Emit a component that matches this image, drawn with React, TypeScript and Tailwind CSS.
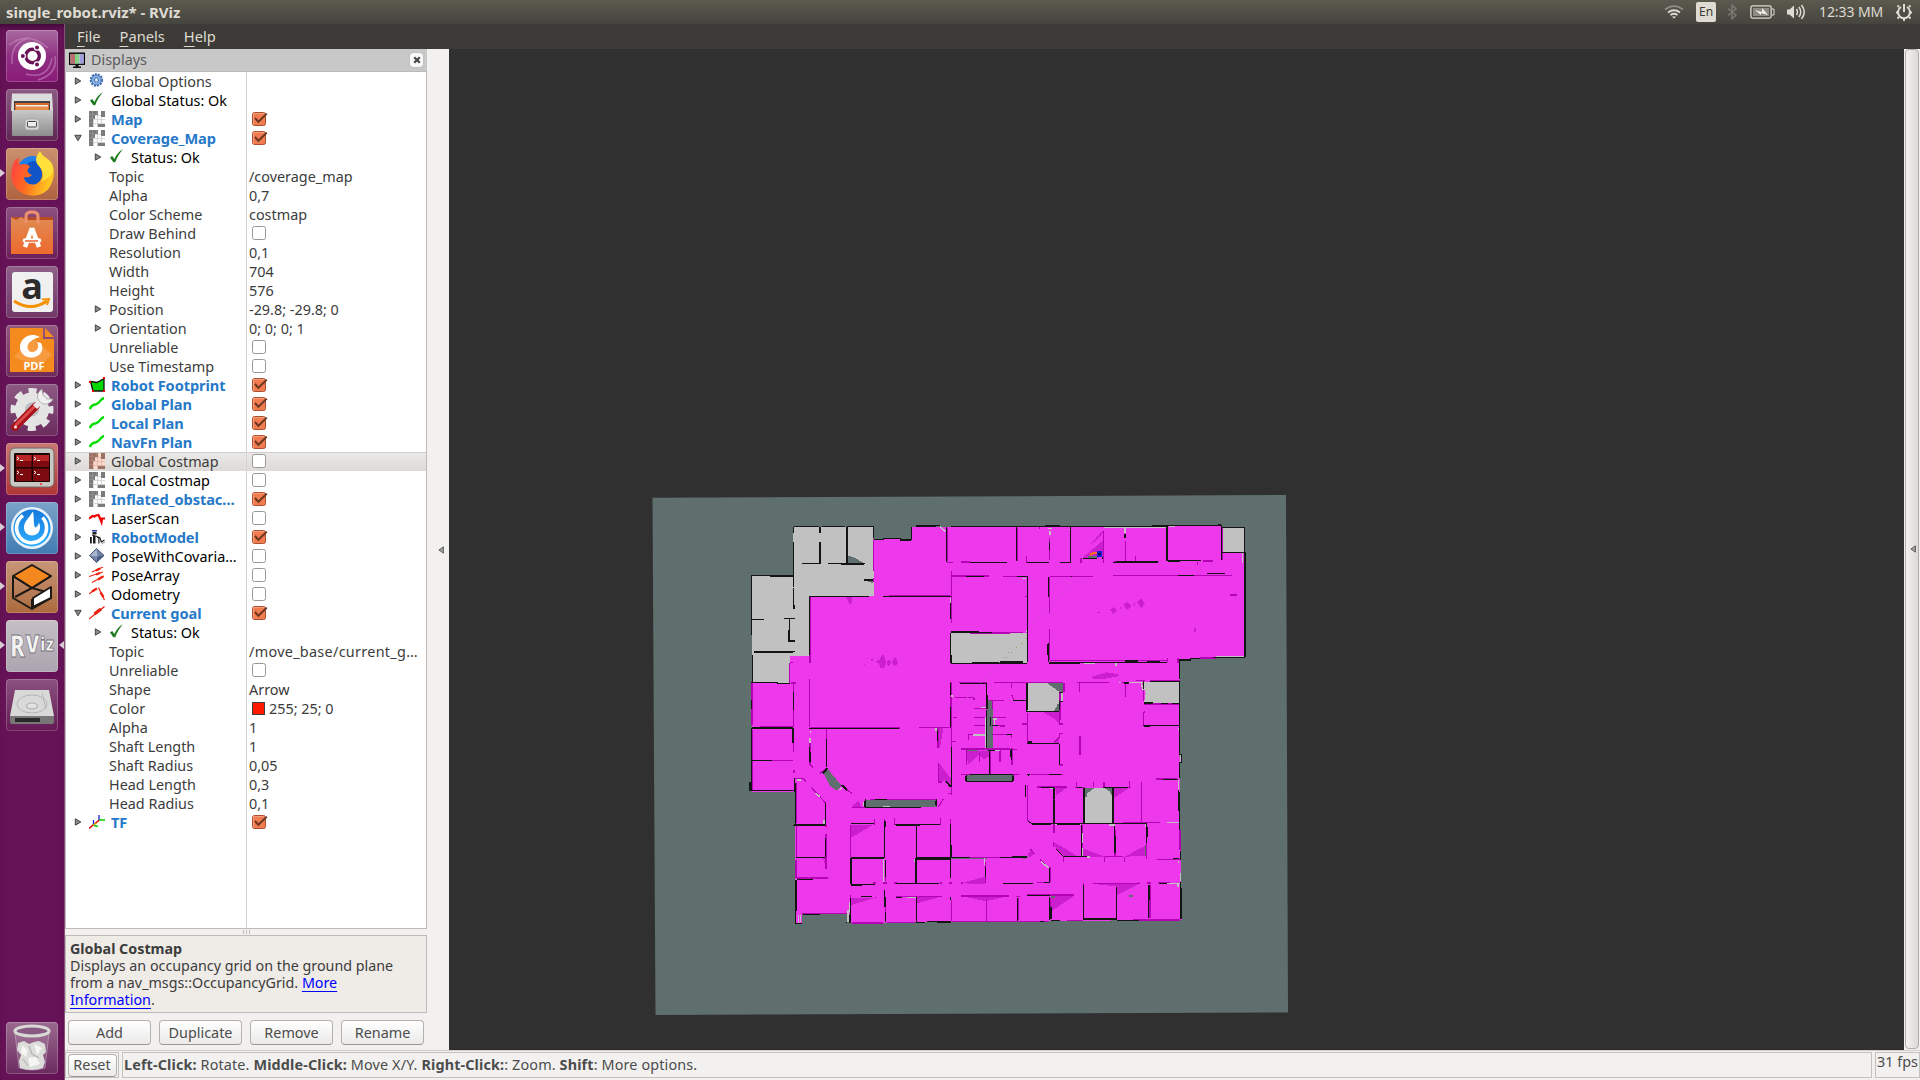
import React from "react";

const FONT = "font-['Noto_Sans','Open_Sans',sans-serif]";

/* ---------- tree icons (16x16) ---------- */

type IconName =
  | "gear" | "check" | "map" | "mapSel" | "foot" | "path" | "laser"
  | "robot" | "cov" | "arrows" | "odom" | "pose" | "tf";

function MapIcon({ selected = false }: { selected?: boolean }) {
  const dark = selected ? "#9c7265" : "#7b7b7b";
  const light = selected ? "#fbd9cb" : "#fdfdfd";
  return (
    <svg width="16" height="16" viewBox="0 0 16 16" shapeRendering="crispEdges">
      <rect width="16" height="16" fill={light} />
      <path d="M4.500 0V16M8.500 0V16M12.500 0V16M0 4.500H16M0 8.500H16M0 12.500H16" stroke={selected ? "#e2b9aa" : "#d6d6d6"} strokeWidth="1" />
      <path d="M0 0H9V4H6V8H4V16H0ZM12 0H16V6H12ZM9 13H16V16H9Z" fill={dark} />
      <path d="M3.500 0V8M7.500 0V4M0 3.500H6M0 7.500H5M0 11.500H4" stroke={selected ? "#ab8174" : "#8e8e8e"} strokeWidth="1" />
    </svg>
  );
}

function TreeIcon({ name }: { name: IconName }) {
  if (name === "map") return <MapIcon />;
  if (name === "mapSel") return <MapIcon selected />;
  return (
    <svg width="16" height="16" viewBox="0 0 16 16" fill="none">
      {name === "gear" && (
        <g transform="translate(-.6 -1)">
          <circle cx="8" cy="8" r="5.400" stroke="#3c6eb4" strokeWidth="2.600" strokeDasharray="2 .9" />
          <circle cx="8" cy="8" r="4.800" fill="#8fb5e3" stroke="#4a7dbf" />
          <circle cx="8" cy="8" r="2.200" fill="#cfe0f4" stroke="#3c6eb4" />
        </g>
      )}
      {name === "check" && <path d="M1 8.500L3.200 7L5.400 10C7.500 5.500 10 2 13.800 .2C10.300 4.500 8 8.500 6.200 13.200H4.400Z" fill="#1e7a1e" />}
      {name === "foot" && (
        <g>
          <path d="M1.500 4.500L8 5.500L15 1.500L15 14L4 14Z" fill="#00d800" stroke="#111" strokeWidth="1.300" />
          <path d="M0 4h2v2H0zM14 0h2v2h-2zM14 13h2v2h-2zM3 13h2v2H3z" fill="#f00" />
        </g>
      )}
      {name === "path" && <path d="M.8 13C2 9.500 4 8.600 7 8.200C11 7.500 11 3 15 2" stroke="#00dc00" strokeWidth="2.400" />}
      {name === "laser" && <path d="M0 8.500L3.500 6L5.500 6.500L7 5.500L9.500 5L11.500 9.500L12.500 12L13 8.500H16" stroke="#f00000" strokeWidth="2.200" />}
      {name === "robot" && (
        <g>
          <path d="M3 1h5v1.500H3z" fill="#2a3bb0" />
          <path d="M3.500 3h4v2.500h-4zM1 8h1.800v6.500H1zM4 7h2.500v7.500H4zM8 7l2.500 1v6l-1.200 1V9H8z" fill="#1c1c1c" />
          <path d="M3 6l5 1.500M10.500 8l2 5 3-2" stroke="#1c1c1c" strokeWidth="1.100" />
          <path d="M11 12l2 2.500 3-1.500" stroke="#777" strokeWidth=".8" />
        </g>
      )}
      {name === "cov" && (
        <g>
          <path d="M7.500 .5L15 7.500L7.500 14.500L.5 7.500Z" fill="#7184a8" stroke="#3f4c68" />
          <path d="M7.500 1L8.500 8.500L1 7.500Z" fill="#a7b5cf" />
          <path d="M8.500 8.500L15 7.500L7.500 14.500Z" fill="#4c5d82" />
        </g>
      )}
      {name === "arrows" && (
        <g stroke="#ee2010">
          <path d="M3 5L14 0M0 9.500L14 5M3 15.500L15 9" strokeWidth="1.100" />
          <path d="M7 3.500L11 1.500M7 7.500L11 6M9 12.500L14 9.500" strokeWidth="2.400" />
        </g>
      )}
      {name === "odom" && (
        <g stroke="#ee2010">
          <path d="M0 8L7 2.500M9.500 1.500L15.500 14" strokeWidth="1.200" />
          <path d="M3 5.500L8 2.500M11.500 6.500L14.500 11" strokeWidth="2.300" />
        </g>
      )}
      {name === "pose" && (
        <g stroke="#ee2010">
          <path d="M0 14L15.500 1.500" strokeWidth="1.300" />
          <path d="M5.500 9L12 4" strokeWidth="3.200" />
        </g>
      )}
      {name === "tf" && (
        <g strokeWidth="1.300">
          <path d="M0 14.500L11 5.500" stroke="#e00000" strokeWidth="1.600" />
          <path d="M4.500 6V11M10 1V6" stroke="#2020e0" />
          <path d="M5 11.500L9 12.500M10 6H16" stroke="#00d000" strokeWidth="1.500" />
          <path d="M4 11L8 9" stroke="#d8b800" />
        </g>
      )}
    </svg>
  );
}

/* ---------- tree data ---------- */

type Row = {
  label: string;
  icon?: IconName;
  tone?: "on" | "off" | "plain";
  depth?: 0 | 1;
  open?: boolean;
  arrow?: boolean;
  value?: string;
  checked?: boolean;
  swatch?: boolean;
  selected?: boolean;
};

const top = (label: string, icon: IconName, checked?: boolean, extra: Partial<Row> = {}): Row => ({
  label, icon, checked, arrow: true, depth: 0, tone: checked ? "on" : "off", ...extra,
});
const prop = (label: string, value?: string, extra: Partial<Row> = {}): Row => ({ label, value, depth: 1, tone: "plain", ...extra });

const rows: Row[] = [
  top("Global Options", "gear", undefined, { tone: "plain" }),
  top("Global Status: Ok", "check"),
  top("Map", "map", true),
  top("Coverage_Map", "map", true, { open: true }),
  top("Status: Ok", "check", undefined, { depth: 1 }),
  prop("Topic", "/coverage_map"),
  prop("Alpha", "0,7"),
  prop("Color Scheme", "costmap"),
  prop("Draw Behind", undefined, { checked: false }),
  prop("Resolution", "0,1"),
  prop("Width", "704"),
  prop("Height", "576"),
  prop("Position", "-29.8; -29.8; 0", { arrow: true }),
  prop("Orientation", "0; 0; 0; 1", { arrow: true }),
  prop("Unreliable", undefined, { checked: false }),
  prop("Use Timestamp", undefined, { checked: false }),
  top("Robot Footprint", "foot", true),
  top("Global Plan", "path", true),
  top("Local Plan", "path", true),
  top("NavFn Plan", "path", true),
  top("Global Costmap", "mapSel", false, { tone: "plain", selected: true }),
  top("Local Costmap", "map", false),
  top("Inflated_obstac…", "map", true),
  top("LaserScan", "laser", false),
  top("RobotModel", "robot", true),
  top("PoseWithCovaria…", "cov", false),
  top("PoseArray", "arrows", false),
  top("Odometry", "odom", false),
  top("Current goal", "pose", true, { open: true }),
  top("Status: Ok", "check", undefined, { depth: 1 }),
  prop("Topic", "/move_base/current_g…"),
  prop("Unreliable", undefined, { checked: false }),
  prop("Shape", "Arrow"),
  prop("Color", "255; 25; 0", { swatch: true }),
  prop("Alpha", "1"),
  prop("Shaft Length", "1"),
  prop("Shaft Radius", "0,05"),
  prop("Head Length", "0,3"),
  prop("Head Radius", "0,1"),
  top("TF", "tf", true),
];

function Expander({ open }: { open?: boolean }) {
  return (
    <svg width="8" height="8" viewBox="0 0 8 8">
      <path d={open ? "M.8 1.300H7.200L4 6.800Z" : "M1.300 .8V7.200L6.800 4Z"} fill="#8a8a88" stroke="#454545" strokeWidth="1" />
    </svg>
  );
}

function CheckBox({ checked }: { checked: boolean }) {
  return (
    <svg width="17" height="16" viewBox="0 0 17 16" fill="none">
      <rect x="1.500" y="1.500" width="13" height="13" rx="2" fill={checked ? "#f07c50" : "#fff"} stroke={checked ? "#a8502f" : "#9a9894"} />
      {checked && <path d="M2.500 13.500V2.500H13.500" stroke="#f9a684" strokeWidth=".8" />}
      {checked && <path d="M4 7L7.400 10.800L15.800 2.600" stroke="#6b3622" strokeWidth="2" />}
    </svg>
  );
}

function TreeRow({ row }: { row: Row }) {
  const tone =
    row.tone === "on"
      ? "font-bold text-[#2679c8] text-[14.600px] tracking-[-0.080px]"
      : row.tone === "off"
        ? "text-black"
        : "text-[#3c3c3c]";
  return (
    <div className={`flex h-[19px] shrink-0 items-stretch ${row.selected ? "bg-linear-to-b from-[#ebeae8] to-[#dcdad7] shadow-[inset_0_1px_0_#cfcdc9]" : ""}`}>
      <div className={`flex w-[181px] shrink-0 items-center border-r border-[#d4d4d4] ${row.depth ? "pl-[28px]" : "pl-[8px]"}`}>
        <div className="mt-[-1px] w-[8px] shrink-0">{row.arrow && <Expander open={row.open} />}</div>
        {row.icon ? (
          <div className="ml-[7px] mr-[6px] mt-[-1px] w-[16px] shrink-0"><TreeIcon name={row.icon} /></div>
        ) : (
          <div className="w-[7px] shrink-0" />
        )}
        <span className={`whitespace-nowrap leading-[19px] ${tone}`}>{row.label}</span>
      </div>
      <div className="flex items-center pl-[2px] text-[#3c3c3c]">
        {row.checked !== undefined && <div className="mt-[-1px] pl-[2px]"><CheckBox checked={row.checked} /></div>}
        {row.swatch && <div className="ml-[3px] mr-[4px] size-[13px] border border-[#404040] bg-[#ff1900]" />}
        {row.value && <span className={`whitespace-nowrap leading-[19px] ${row.value.length > 18 ? "tracking-[0.300px]" : ""}`}>{row.value}</span>}
      </div>
    </div>
  );
}

/* ---------- launcher ---------- */

function LauncherGlyph({ id }: { id: string }) {
  return (
    <svg width="52" height="52" viewBox="0 0 52 52" fill="none" className="block overflow-visible">
      {id === "dash" && (
        <g>
          <path d="M3 15Q22 0 42 18M49 26Q52 44 32 50M6 34Q4 12 24 8M20 44Q42 50 46 28" stroke="#d49acb" strokeOpacity=".5" strokeWidth="1.500" />
          <circle cx="26" cy="26" r="14" fill="#fff" />
          <circle cx="26.500" cy="26" r="6.800" stroke="#6a1257" strokeWidth="3.400" />
          <g fill="#6a1257" stroke="#fff" strokeWidth="1.200">
            <circle cx="16.800" cy="26" r="2.600" /><circle cx="31" cy="17.500" r="2.600" /><circle cx="31" cy="34.500" r="2.600" />
          </g>
        </g>
      )}
      {id === "files" && (
        <g>
          <path d="M6 4.500H46L47 22H5Z" fill="#dcdcdc" />
          <path d="M8 12H44V22H8Z" fill="#444" />
          <path d="M9 14H43V22H9Z" fill="#d9692a" />
          <path d="M10 16H42V22H10Z" fill="#f0f0ea" />
          <path d="M10 17.500H42V22H10Z" fill="#e88c46" />
          <rect x="6" y="21" width="41" height="26" rx="1" fill="url(#silver)" />
          <rect x="19" y="30" width="14" height="11" rx="2" fill="#d8d8d8" stroke="#a5a5a5" />
          <rect x="21.500" y="32.500" width="9" height="5.500" rx="1" fill="#ececec" stroke="#444" />
        </g>
      )}
      {id === "firefox" && (
        <g>
          <circle cx="27" cy="24" r="16" fill="#1f7fe8" />
          <circle cx="29" cy="25" r="12" fill="#0f55c8" />
          <path d="M8 14C5 22 3 32 10 40C18 50 36 50 43 40C50 30 49 18 43 12C40 9 36 8 34 3C30 8 29 14 33 18C38 24 37 33 30 36C23 38 18 34 18 29C21 30 24 29 26 27C21 25 20 22 24 19C21 15 16 16 14 17C12 15 12 12 13 10C10 11 9 12 8 14Z" fill="url(#fox)" />
          <path d="M34 3C29 9 29 14 33 18C38 23 38 30 35 34C44 30 50 24 46 16C43 10 37 10 34 3Z" fill="#ffe03a" />
        </g>
      )}
      {id === "software" && (
        <g>
          <path d="M5 10H47V47H5Z" fill="url(#bag)" />
          <path d="M5 10L10 13L15 10L20 13H47V10Z" fill="#b94b22" />
          <path d="M20 16V9Q20 5 26 5Q32 5 32 9V16" stroke="#ef9270" strokeWidth="3" />
          <path d="M26 21L19 40M26 21L33 40" stroke="#fff" strokeWidth="4.500" />
          <path d="M19 33.500H33" stroke="#fff" strokeWidth="4.600" strokeLinecap="round" />
          <path d="M19 34H32" stroke="#ee6f35" strokeWidth="1.600" />
        </g>
      )}
      {id === "amazon" && (
        <g>
          <rect x="6" y="6" width="41" height="40" rx="3" fill="#f0f0f0" />
          <text x="26" y="33" textAnchor="middle" fontSize="36" fontWeight="700" fontFamily="Open Sans, sans-serif" fill="#2c2c2c">a</text>
          <path d="M8 35Q25 46 41 35" stroke="#f59100" strokeWidth="3" />
          <path d="M36 33.500L43 33L41 39" stroke="#f59100" strokeWidth="2" />
        </g>
      )}
      {id === "pdf" && (
        <g>
          <path d="M4 3H37V14H48V47H4Z" fill="#f58a1f" />
          <path d="M39 3L48 12H39Z" fill="#f58a1f" />
          <path d="M8 32L26 12L46 30L32 42Z" fill="#fff" fillOpacity=".15" />
          <path d="M34 12C24 6 13 14 14 23C15 31 23 34 29 32C36 30 38 23 35 18L31 17C34 22 31 27 26 27C21 27 20 20 24 17C27 14 31 13 34 12Z" fill="#fff" />
          <text x="28" y="45" textAnchor="middle" fontSize="11" fontWeight="700" fontFamily="Open Sans, sans-serif" fill="#fff">PDF</text>
        </g>
      )}
      {id === "settings" && (
        <g>
          <circle cx="26" cy="25.500" r="18.500" stroke="#e4e4e4" strokeWidth="6" strokeDasharray="8 6.530" strokeDashoffset="4" />
          <circle cx="26" cy="25.500" r="12" fill="#bdbdbd" stroke="#e4e4e4" strokeWidth="10" />
          <path d="M9 43L30 22" stroke="#a51219" strokeWidth="7.500" strokeLinecap="round" />
          <path d="M10 41L29 22" stroke="#dd4a4a" strokeWidth="3" strokeLinecap="round" />
          <path d="M29 23L35 17" stroke="#e8e8e8" strokeWidth="6" />
          <path d="M36 5C31 8 30 14 34 18C38 22 45 20 47 15L41 15L37 11Z" fill="#efefef" stroke="#999" strokeWidth=".7" />
          <circle cx="9.500" cy="43" r="1.600" fill="#f7dada" />
        </g>
      )}
      {id === "terminal" && (
        <g>
          <rect x="4" y="5" width="44" height="39" rx="5" fill="#c9c7c2" stroke="#6d6b68" />
          <rect x="8" y="10" width="36" height="29" rx="1" fill="#1c0505" />
          <path d="M10 12H25.500V24H10ZM27 12H43V24H27ZM10 25.500H25.500V38H10ZM27 25.500H43V38H27Z" fill="#7c0a0e" />
          <path d="M10 12H25.500V18H10ZM27 12H43V18H27Z" fill="#b82628" />
          <g stroke="#fff" strokeWidth="1"><path d="M11 14l2 1.500-2 1.500M14 17.500h3M28 14l2 1.500-2 1.500M31 17.500h3M11 28l2 1.500-2 1.500M14 31.500h3M28 28l2 1.500-2 1.500M31 31.500h3" /></g>
          <circle cx="35" cy="41" r="1" fill="#e22" />
        </g>
      )}
      {id === "drop" && (
        <g>
          <circle cx="26" cy="26" r="21" fill="#e8f2fb" />
          <circle cx="26" cy="26" r="18.500" fill="url(#sky)" />
          <path d="M27 9.500C22 17 18 20 18 25.500C18 36 34 36 34 25.500C34 23.500 33.600 22 33 20.500C32 23.500 31 25 29.500 25.500C27 24 28.500 17 27 9.500Z" fill="#fff" />
          <path d="M17 13.500A15 15 0 1 0 36.500 15.500" stroke="#fff" strokeWidth="3.600" />
        </g>
      )}
      {id === "box" && (
        <g stroke="#1e1a17" strokeWidth="2" strokeLinejoin="round">
          <path d="M26 4L45 15L26 27L7 15Z" fill="#f5871f" />
          <path d="M7 15V37L26 48L45 37M7 15L26 27L9 36M26 27L45 15" />
          <path d="M26 27L40 31M26 38V48" />
          <path d="M27 37L45 26V37L27 46Z" fill="#fff" />
        </g>
      )}
      {id === "rviz" && (
        <g fontFamily="Open Sans, sans-serif" fontWeight="800" fill="#f2f2f2" stroke="#77727a" strokeWidth=".8">
          <text x="4" y="37" fontSize="30" textLength="15" lengthAdjust="spacingAndGlyphs">R</text>
          <text x="19.500" y="33" fontSize="25" textLength="14" lengthAdjust="spacingAndGlyphs">V</text>
          <text x="34" y="31" fontSize="19" textLength="14" lengthAdjust="spacingAndGlyphs">iz</text>
        </g>
      )}
      {id === "disk" && (
        <g>
          <path d="M9 11H43L48 37H4Z" fill="#d9d9d9" />
          <path d="M4 37H48V43Q48 45 46 45H6Q4 45 4 43Z" fill="#777" />
          <path d="M9 39H34V43H9Z" fill="#2a2a2a" />
          <ellipse cx="26" cy="25" rx="15" ry="9" stroke="#b5b5b5" />
          <ellipse cx="26" cy="27" rx="5.500" ry="3" fill="#e2e2e2" stroke="#a8a8a8" />
          <path d="M36 14L40 30" stroke="#b5b5b5" />
        </g>
      )}
      {id === "trash" && (
        <g>
          <path d="M9 11L13 46Q26 50 39 46L43 11Z" fill="#fff" fillOpacity=".12" stroke="#fff" strokeOpacity=".3" />
          <path d="M12 21L18 19L23 22L28 20L33 19L39 22L40 30L37 33L39 40L37 46Q26 50 14 46L13 39L15 33L11 28Z" fill="#dcdcda" />
          <path d="M16 23L22 28L20 35L15 31ZM28 22L36 26L31 33ZM22 36L30 35L34 42L24 45Z" fill="#f5f5f3" />
          <path d="M23 24L26 32L33 36M17 37L22 44" stroke="#b5b5b3" strokeWidth="1.200" />
          <ellipse cx="26" cy="9" rx="17" ry="5" fill="#8b5a82" stroke="#d9d9d6" strokeWidth="3.200" />
        </g>
      )}
    </svg>
  );
}

const tiles = [
  { id: "dash", bg: "bg-linear-to-b from-[#a86a9f] via-[#8f2f83] to-[#8a1a78]" },
  { id: "files", bg: "bg-linear-to-b from-[#8c5a82] to-[#5f2755]" },
  { id: "firefox", bg: "bg-linear-to-b from-[#c9916f] to-[#b0623f]", run: true },
  { id: "software", bg: "bg-linear-to-b from-[#8c5080] to-[#6d1f5b]" },
  { id: "amazon", bg: "bg-linear-to-b from-[#8f6089] to-[#703766]" },
  { id: "pdf", bg: "bg-linear-to-b from-[#93597f] to-[#6f2a5c]" },
  { id: "settings", bg: "bg-linear-to-b from-[#8c5a84] to-[#6b2a5d]" },
  { id: "terminal", bg: "bg-linear-to-b from-[#c97772] to-[#ae3434]", run: true },
  { id: "drop", bg: "bg-linear-to-b from-[#7aa3c8] to-[#417cb2]", run: true },
  { id: "box", bg: "bg-linear-to-b from-[#c79778] to-[#ac6a3c]", run: true },
  { id: "rviz", bg: "bg-linear-to-b from-[#c5bfc6] to-[#aca4ae]", run: true, focus: true },
  { id: "disk", bg: "bg-linear-to-b from-[#8a5280] to-[#641854]" },
];

function Tile({ id, bg, run, focus }: { id: string; bg: string; run?: boolean; focus?: boolean }) {
  return (
    <div className="relative flex w-[65px] shrink-0 pl-[6px]">
      {run && <div className="absolute left-0 top-[21px] h-0 w-0 border-y-[4px] border-l-[5px] border-y-transparent border-l-[#d8ccd5]" />}
      {focus && <div className="absolute right-[1px] top-[21px] h-0 w-0 border-y-[4px] border-r-[5px] border-y-transparent border-r-[#d8ccd5]" />}
      <div className={`size-[52px] rounded-[4px] shadow-[inset_0_0_0_1px_rgba(255,255,255,0.2)] ${bg}`}>
        <LauncherGlyph id={id} />
      </div>
    </div>
  );
}

/* ---------- floor plan; each quadrant is drawn at 3 units per pixel ---------- */

type Quadrant = {
  dx: number; dy: number;
  shade?: string; purple: string; light: string; slate: string; black: string; thick: string;
};

const quadrants: Quadrant[] = [
  {
    dx: 0, dy: 0,
    shade: "M318 262H336V278L330 284ZM408 455L418 450L424 440L430 434L436 445L438 462L430 476L422 474L418 462ZM442 452L448 448L454 458L448 470L442 464ZM456 456L464 440L472 452L474 462L462 469ZM380 444H384V448H380ZM394 448H398V452H394ZM372 462H375V465H372Z",
    purple: "M401 90V182M401 205V216M514 54V90M622 54V154M620 157H638M634 183V338M634 198H746M789 199H810M663 156H690M690 369H810M448 257H630M212 262V428M210 430V460M209 507V630M160 521V630M36 519V630M149 458V519M149 458H160M153 519H167M656 518H740M762 518H790M633 515V630M645 562H703M702 565V570M757 574V630M750 571H792M703 595H742M703 623H740M770 623H798M788 518H810",
    light: "M160 70V92M242 92V96M400 50V58M601 50L616 64M620 50V56M632 265V280M662 364H690M739 520V534M632 558H640M723 592H738M758 627H770",
    slate: "M323 150V160M335 155V162M345 158V162M355 159H370M384 212L400 218M745 573H752V630M750 573V630",
    black: "M160 52V68M160 95V230M160 235V295M161 50H238M246 50H315M322 50H400M400 48V85M186 160H244M264 160H374M402 90H432M430 87H482M514 50V90M530 48H600M620 50V155M633 50H810M690 157H800M34 197H160M34 197V374M36 328H72M132 326H165M149 326V392M42 426H164M38 435V518M34 518H114M112 520H150M210 258V435M210 260H296M296 260H386M430 260H632M632 280V326M678 199H732M632 368H755M633 370V460M632 460H810M162 546V600M34 570V598M740 520V596M632 590V630M34 600V630M660 520H740M632 520V556",
    thick: "M240 52V70M240 95V158M321 50V158M303 162H373M372 209H400M90 199H158M480 90H514M528 47H588M147 360V393H166M162 285V297M632 367H718M695 459H810M740 556V596M634 435V460M42 426H160",
  },
  {
    dx: 780, dy: 0,
    shade: "M246 145L308 92V140L285 145ZM268 106L308 62V70L285 94ZM330 299L340 292L352 302L340 311ZM358 294L364 290V298ZM370 285L382 276L396 288L382 300ZM402 280H405V288H402ZM412 278L424 266L434 280L424 296ZM290 307L304 305L298 311ZM276 500L320 487L356 493L350 500L310 507L278 506ZM582 352L588 355V364L583 367Z",
    purple: "M52 54V154M80 138V158M149 85V150M310 62V158M376 92V154M407 138V154M342 155H476M503 50V146M666 52V150M610 153H638M593 155V166M149 200H279M339 197H696M149 200V310M149 357V450M149 452H500M502 445V455M534 444V458M10 199H50M10 518H190M192 518V546M82 205V456M230 518H326M238 520V546M376 520V562M360 517H378M430 540V573M432 582H538M430 606V630M600 444H648M540 512H450M78 258V262M35 520V534M35 555L42 571M690 255H710M243 145V160M0 571H12M180 545V630M0 623H16M408 512H436M118 52V58M600 47H606M0 368H70",
    light: "M144 56H155M150 64V74M210 56V60M312 53H502M375 54V70M508 49H524M728 128V158M648 439H732M734 250V286M82 318V346M348 460V467M252 460H284M66 205H78M385 517H430M424 520L430 540M80 360V366M356 518H364",
    slate: "M150 518L190 545M160 518L192 535M164 518H190M172 522H190M180 532H190M185 540V546M175 582V603M165 600H178M170 592H178M264 142H292",
    black: "M50 50V154M80 159H148M149 95V120M212 50V158M180 157H212M0 50H210M210 50H310M310 50H505M308 142V146M248 145H290M340 157H474M503 50V154M506 153H602M505 46H665M665 48V150M665 52H734M734 52V443M666 127H734M82 198V456M50 200H82M146 200V262M146 400V456M146 458H500M214 198V202M534 197H582M620 192H675M0 460H82M540 448V508M540 450H572M570 447H600M450 514H540M432 514V538M540 514V630M432 580H460M484 580H505M515 580H536M82 518V606M40 573H82M82 604H180M178 548H190M178 576H190M180 576V602M640 444H734",
    thick: "M502 50V153M374 72V84M135 47H180M455 47H505M505 153H540M348 157H474M145 402V435M146 458H240M374 453H414M440 457H480M0 455H70M82 518V606M735 126V440M372 518H388M432 580H460M540 450H572M655 45H662M292 126L302 134",
  },
  {
    dx: 0, dy: 600,
    shade: "M332 344H400L332 384ZM596 158L634 208V230L616 210L597 216ZM594 55H610L600 115H594ZM334 290L356 272L364 292ZM662 520L735 500V522ZM332 563H406L334 585ZM530 560H605L530 580ZM662 558H806L738 574ZM678 122H748V140L730 148L718 134L684 164ZM248 445H258V470Z",
    purple: "M36 0V46M36 60V240M60 50H160M208 0V52M160 0V50M210 54H480M537 52H632M210 85V165L220 173M260 58V90M160 85V125M162 180V190M36 152H160M162 206H190L198 216M214 232L258 280M168 218V340M240 190L260 174M300 225L336 250M390 268H590M335 292H374M596 290L610 266M594 55V115M596 160V216H606M634 20V255M624 250H636M640 23H650M636 94H648M703 22H740M756 22H796M703 47H740M756 47H796M756 73H810M686 90V74H740M664 117H810M680 120V165M718 128V155M780 120V155M750 120V195M662 194H810M404 328V345M433 328V335M464 325V345M602 325V345M632 328V440M332 345V440M170 348V440M258 372V478M168 504H264M168 450V504M332 450V520M400 519H408M430 519H440M463 519H470M600 519H606M627 519H636M663 519H670M436 450V514M632 445V505M640 443H780M736 455V520M332 555V640M404 562H408M437 565V636M468 560H605M530 565V630M634 570V634M662 558H806M740 570V634M335 639H430M440 637H526M635 634H810M185 610H325M258 350V345",
    light: "M212 62V68M210 85V100M170 210H184M252 330V342M430 448V515M525 448V456M170 508V560M176 615V638M181 616V636M324 600V636M330 575V605M734 444V465M372 275V288M588 55V62M738 20V115M763 25V45M700 75H735M760 122H780M226 250L240 260M584 280H590M428 290H450M500 562H528M306 232L298 240M434 405V430",
    slate: "M744 0H756V120H744ZM680 120H715M680 206H810M680 200H810M680 212H810M735 559H748M540 444H740M760 443H810",
    black: "M34 0V0M34 55H160M34 58V240M34 152H96M30 243H164M210 110V155M208 55H476M260 86V172M166 220V344M163 205V245M166 344H256M258 280V345M256 385V440M168 444H256M170 508H218M168 510V640M166 640H186M188 614H240M330 614V640M320 636V640M332 342H402M434 332V440M434 540V590M466 345H600M530 345V440M632 342V442M332 442H434M334 445V525M334 525H404M436 450V500M526 445V520M528 442H634M468 522H598M632 448V505M736 470V500M364 560H396M468 562H486M332 565V638M437 562V590M437 607V636M530 562V636M528 637H554M560 636H634M632 560V570M632 0V50M374 292H543M376 268V292M405 269H440M590 268V288M636 110V230M592 60V94M740 0V22M750 120V195M752 22V47M756 47H774M745 122H765M680 195V215M680 215H810M690 195H810M634 442H690M790 520H810M740 0V115",
    thick: "M36 54H158M158 55V100M210 125V155M163 344V346H254M168 510V604M332 443H432M333 445V522M334 524H366M528 446H632M528 446V520M468 345H540M434 332V350M632 405V442M678 197V214M31 215V242M375 272V290M588 272V286M262 175L248 190M306 225L322 242M616 212L632 230M590 635H634",
  },
  {
    dx: 780, dy: 600,
    shade: "M128 6H178V40L160 25ZM162 98L178 82V98ZM166 234H200L168 256ZM340 235H386L342 264ZM160 396L195 415L232 440H195L170 418ZM248 415L315 440H250ZM374 440L440 405V438ZM154 558H222L154 604ZM285 522H418L352 554V530ZM82 436L94 416L104 430L90 442Z",
    purple: "M0 22H14M0 48H14M0 118H52M2 118V155M0 194H56M35 74V85M82 8V98M178 0V42H190M164 96L178 82V70H190M67 42H82M180 165H190M82 194H190M240 78V134M430 8V48M432 6H436M36 115V165M82 225V330L92 340M162 240V370M110 231H200M230 216V232M224 232H255M280 215V232M312 215V232M340 232H394M388 212V230M340 235V330M424 216V340M468 207H530M370 338H480M244 345V438M248 345V420M345 360V438M440 345V448M370 440H315M314 440V455M374 440V455M191 440V456M120 448L148 475M160 396V410M470 448H540M150 472V516M0 558H25M48 560H60M55 565V630M82 555H222M250 520V625M280 520H420M350 530V625M416 515V520M440 519H452M450 525V625M475 517H510M152 565V625M0 634H145M200 632H250M400 630H540M104 432L92 418M540 360V420M110 518H148",
    light: "M82 2H152M84 95H94M165 343H244M344 345H328M246 370V400M246 415V438M436 342V350M535 210V242M542 134V155M536 452V458M542 490V514M500 520H540M248 626H350M446 595V625M500 338H538M536 55V60M388 341H410M150 234H160M262 441H270M124 455L146 475M534 520V530",
    slate: "M0 200H34M0 206H34M0 212H34M255 236L270 245M256 240H268M256 248H262M320 236H338M330 242H338M438 405V438M70 444L85 440M60 441H84M165 0H178M152 562H165M388 558H400",
    black: "M82 6H118M538 0V134M430 46H538M82 100H178M178 102V164M82 194H90M146 194H182M18 75H35M35 118V150M40 195V214M0 215H40M0 195H38M78 225V260M122 232H162M162 232V340M85 334L96 342H244M165 340H440M250 235V340M338 235V340M310 232H384M232 232H246M246 345V440M344 348V430M440 340V400M190 440H260M168 418L190 440M490 208H535M535 240V300M538 300V360M0 442H80M150 475V518H132M12 520H100M82 556H150M150 560V630M54 565V632M250 525V626M350 530V630M446 525V625M250 630H350M350 631H418M478 520H500M250 235V338M540 134H545V158H538V205M542 424V450M542 516V626M520 447H538M152 632H180M200 634H202M120 634H132",
    thick: "M83 97H96M34 120V140M162 234V268M163 270V338M38 197V214M252 235V338M338 235V338M536 245V302M432 47H450M96 341H152M170 341H240M35 441H82M542 535V626M446 525V570M152 590V628M250 628H348M83 194H88M440 350V380M344 378V428",
  },
];

function FloorPlan() {
  return (
    <svg className="block" width="1455" height="1001" viewBox="449 49 1455 1001" fill="none">
      <path d="M652.500 497.700L1286 495L1288 1012.500L655.500 1015Z" fill="#5f6f6d" />
      <g transform="translate(740 510) scale(.33333)" shapeRendering="crispEdges">
        <path d="M160 50H400V88H514V50H620L1445 46V52H1514V443L1320 447V515L1318 700L1325 1230L630 1235L330 1240V1212H185V1240H166V845H35V198H160Z" fill="#ee38ec" />
        <g fill="#c1c1c1">
          <path d="M160 50H400L402 258H210V438H150V519H36V198H160Z" />
          <path d="M634 368H860V458H634ZM1446 52H1514V127H1446ZM1212 515H1318V580H1212L1217 550L1208 525Z" />
          <path d="M862 518H920L958 545L970 548V575L958 580V603H862Z" />
          <path d="M1035 940V855L1045 838L1060 834H1095L1112 846L1117 860V940Z" />
        </g>
        <g fill="#5f6f6d">
          <path d="M322 136L346 144L370 160H322ZM920 518H970V546L955 544ZM942 602L955 582V604Z" />
          <path d="M376 869H592V891H376ZM250 790L262 776L304 826L292 842L272 830ZM744 570H758V720H744ZM680 796H820V814H680Z" />
          <path d="M1032 835H1062L1040 850V860H1032ZM1094 834H1118V860L1110 845Z" />
        </g>
        {quadrants.map((q) => (
          <g key={`${q.dx}-${q.dy}`} transform={`translate(${q.dx} ${q.dy})`}>
            <path d={q.shade} fill="#cb1fcd" />
            <path d={q.slate} stroke="#5f6f6d" strokeWidth="5" />
            <path d={q.purple} stroke="#b303b5" strokeWidth="3.600" />
            <path d={q.light} stroke="#c1c1c1" strokeWidth="4.500" />
            <path d={q.black} stroke="#141414" strokeWidth="3" />
            <path d={q.thick} stroke="#141414" strokeWidth="5.500" />
          </g>
        ))}
        <path d="M1060 146L630 620L540 718" stroke="#c06ab0" strokeWidth="2.500" strokeDasharray="3 17" />
        <path d="M860 386L790 450" stroke="#9a9a60" strokeWidth="3" strokeDasharray="3 17" />
        <path d="M1050 134L1058 130H1072" stroke="#ff6a1e" strokeWidth="7" />
        <path d="M1070 124H1086V140H1070Z" fill="#1520d8" />
        <path d="M1074 128H1084V136H1074Z" fill="#0a1050" />
      </g>
    </svg>
  );
}

/* ---------- indicators ---------- */

function Indicators() {
  return (
    <div className="flex items-center text-[#dfdbd2]">
      <svg width="20" height="14" viewBox="0 0 20 14" fill="none" strokeWidth="1.800">
        <path d="M1 4.500Q10 -2.500 19 4.500" stroke="#8d8b84" />
        <path d="M4 7.500Q10 3 16 7.500M6.500 10Q10 7.500 13.500 10" stroke="#dfdbd2" />
        <path d="M8 11.500H12L10 13.800Z" fill="#dfdbd2" />
      </svg>
      <div className="ml-[12px] flex h-[20px] w-[20px] items-center justify-center rounded-[2px] bg-[#dfdbd2] text-[12px] text-[#3c3b37]">En</div>
      <svg className="ml-[11px]" width="10" height="16" viewBox="0 0 10 16" fill="none">
        <path d="M1 4.500L9 11L5 15V1L9 5L1 11.500" stroke="#7d7b74" strokeWidth="1.400" />
      </svg>
      <svg className="ml-[13px]" width="25" height="14" viewBox="0 0 25 14" fill="none">
        <rect x=".9" y=".9" width="20.200" height="12.200" rx="1.500" stroke="#dfdbd2" strokeWidth="1.300" />
        <rect x="3" y="3" width="16" height="8" fill="#8d8b84" />
        <path d="M22 4H24V10H22" stroke="#dfdbd2" />
        <path d="M5 5L12 7V3L18 10L11 8V10Z" fill="#f3f0e8" />
      </svg>
      <svg className="ml-[11px]" width="21" height="18" viewBox="0 0 21 18" fill="none" stroke="#dfdbd2" strokeWidth="1.500">
        <path d="M1 6.500H3.500L8 2.500V15.500L3.500 11.500H1Z" fill="#dfdbd2" stroke="none" />
        <path d="M10.500 6Q12.500 9 10.500 12M13 4Q16.500 9 13 14M15.500 2Q21 9 15.500 16" />
      </svg>
      <span className="ml-[12px] w-[65px] whitespace-nowrap text-[14px] leading-[22px] tracking-[-0.080px]">12:33 MM</span>
      <svg className="ml-[11px]" width="18" height="18" viewBox="0 0 18 18" fill="none" stroke="#dfdbd2">
        <path d="M6 4A6 6 0 1 0 12 4" strokeWidth="2" />
        <path d="M9 1V9" strokeWidth="2" />
        <path d="M4 4L2.500 2.500M14 4L15.500 2.500M1 9.500H3M15 9.500H17M4 14L2.500 15.500M14 14L15.500 15.500M9 15.500V18" strokeWidth="2" />
      </svg>
    </div>
  );
}

function Btn({ children, className = "" }: { children: React.ReactNode; className?: string }) {
  return (
    <button className={`flex items-center justify-center rounded-[4px] border border-[#b5b2ad] border-b-[#9b9893] bg-linear-to-b from-white to-[#ebeae9] text-[#4c4c4c] ${className}`}>
      {children}
    </button>
  );
}

export default function App() {
  return (
    <div className={`flex h-[1080px] w-[1920px] flex-col overflow-hidden bg-[#f2f1f0] text-[14.400px] ${FONT}`}>
      <header className="flex h-[24px] shrink-0 items-center justify-between bg-linear-to-b from-[#5c5a4f] to-[#45443e] pl-[6px] pr-[7px]">
        <span className="text-[15px] font-bold tracking-[-0.050px] text-[#dfdbd2]">single_robot.rviz* - RViz</span>
        <Indicators />
      </header>

      <div className="flex min-h-0 flex-1">
        <nav className="flex w-[65px] shrink-0 flex-col border-r border-[#86507a] bg-[#661256] pb-[6px] pt-[6px] shadow-[inset_0_6px_5px_-3px_rgba(40,0,35,0.6)]">
          <svg width="0" height="0" className="absolute">
            <defs>
              <linearGradient id="silver" x2="0" y2="1"><stop stopColor="#c9c9c9" /><stop offset="1" stopColor="#8d8d8d" /></linearGradient>
              <linearGradient id="sky" x2="0" y2="1"><stop stopColor="#1478dc" /><stop offset="1" stopColor="#2fb0ff" /></linearGradient>
              <linearGradient id="fox" x1="0" y1="0" x2="1" y2=".3"><stop stopColor="#ff3a4a" /><stop offset=".5" stopColor="#ff6a20" /><stop offset="1" stopColor="#ffc421" /></linearGradient>
              <linearGradient id="bag" x2="0" y2="1"><stop stopColor="#e08a55" /><stop offset="1" stopColor="#ee6a2c" /></linearGradient>
            </defs>
          </svg>
          <div className="flex flex-col gap-[7px]">
            {tiles.map((t) => <Tile key={t.id} {...t} />)}
          </div>
          <div className="mt-auto"><Tile id="trash" bg="bg-linear-to-b from-[#9a6a90] to-[#6c2a60]" /></div>
        </nav>

        <div className="flex min-w-0 flex-1 flex-col">
          <div className="flex h-[25px] shrink-0 items-start gap-[19px] bg-[#3c3b37] pl-[12px] text-[14.700px] text-[#dfdbd2]">
            {[["F", "ile"], ["P", "anels"], ["H", "elp"]].map(([a, b]) => (
              <span key={a} className="leading-[24px]"><span className="underline underline-offset-[4px]">{a}</span>{b}</span>
            ))}
          </div>

          <main className="flex h-[1001px] shrink-0">
            <aside className="flex w-[362px] shrink-0 flex-col">
              <div className="flex h-[22px] shrink-0 items-center bg-[#c8c8c8] pl-[4px] pr-[4px] text-[#5a5a5a]">
                <svg width="16" height="16" viewBox="0 0 16 16">
                  <rect x=".7" y="1.200" width="14.600" height="11" fill="#fff" stroke="#000" strokeWidth="1.400" />
                  <rect x="1.500" y="2" width="4.500" height="9.500" fill="#bb6c6c" />
                  <rect x="6" y="2" width="4.500" height="9.500" fill="#84d384" />
                  <rect x="10.500" y="2" width="4" height="9.500" fill="#9d9de0" />
                  <path d="M6.500 12.500H9.500V14.500H12V16H4V14.500H6.500Z" fill="#111" />
                </svg>
                <span className="ml-[6px] flex-1">Displays</span>
                <div className="flex h-[14px] w-[13px] items-center justify-center rounded-[3px] bg-[#f8f8f8] shadow-[0_0_1px_#888]">
                  <svg width="8" height="8" viewBox="0 0 8 8"><path d="M1.200 1.200L6.800 6.800M6.800 1.200L1.200 6.800" stroke="#4a4a4a" strokeWidth="2.300" /></svg>
                </div>
              </div>
              <div className="flex h-[858px] shrink-0 flex-col border border-[#bdbbb8] bg-white">
                {rows.map((r, i) => <TreeRow key={i} row={r} />)}
                <div className="w-[181px] flex-1 border-r border-[#d4d4d4]" />
              </div>
              <div className="flex h-[6px] shrink-0 items-center justify-center gap-[2px]">
                <i className="h-[4px] w-px bg-[#c0beba]" /><i className="h-[4px] w-px bg-[#c0beba]" /><i className="h-[4px] w-px bg-[#c0beba]" />
              </div>
              <div className="h-[78px] shrink-0 border border-[#bdbbb8] bg-[#efebe7] pl-[4px] pt-[4px] text-[14.300px] leading-[17px] text-[#3c3c3c]">
                <div className="font-bold">Global Costmap</div>
                <div>Displays an occupancy grid on the ground plane</div>
                <div>from a nav_msgs::OccupancyGrid. <a className="text-[#0000ff] underline underline-offset-[3px]">More</a></div>
                <div><a className="text-[#0000ff] underline underline-offset-[3px]">Information</a>.</div>
              </div>
              <div className="mt-[7px] flex gap-[8px] pl-[3px]">
                {["Add", "Duplicate", "Remove", "Rename"].map((t) => <Btn key={t} className="h-[25px] w-[83px]">{t}</Btn>)}
              </div>
            </aside>
            <div className="flex w-[22px] shrink-0 items-center justify-end pr-[5px]">
              <svg width="6" height="8" viewBox="0 0 6 8"><path d="M5.500 .8V7.200L.8 4Z" fill="#9a9a98" stroke="#555" strokeWidth=".8" /></svg>
            </div>
            <div className="w-[1455px] shrink-0 bg-[#303030]"><FloorPlan /></div>
            <div className="flex w-[16px] shrink-0 pl-px">
              <div className="flex h-[1000px] w-[14px] items-center justify-end rounded-[4px] border border-[#b0aca6] bg-linear-to-r from-[#f3f2f1] to-[#dcdad8] pr-[2px]">
                <svg width="6" height="8" viewBox="0 0 6 8"><path d="M5.500 .8V7.200L.8 4Z" fill="#9a9a98" stroke="#555" strokeWidth=".8" /></svg>
              </div>
            </div>
          </main>

          <footer className="flex h-[30px] shrink-0 items-start border-t border-[#d0cecb] pt-px text-[#4c4c4c]">
            <div className="flex h-[26px] w-[54px] items-center justify-center border border-[#c4c2be]">
              <Btn className="h-[23px] w-[49px]">Reset</Btn>
            </div>
            <div className="ml-[3px] flex h-[26px] w-[1750px] items-center border border-[#c4c2be] pl-px tracking-[0.130px] whitespace-pre">
              <b>Left-Click:</b> Rotate. <b>Middle-Click:</b> Move X/Y. <b>Right-Click:</b>: Zoom. <b>Shift</b>: More options.
            </div>
            <div className="ml-[3px] flex h-[26px] flex-1 items-start border border-[#c4c2be] pl-px leading-[18px] whitespace-nowrap">31 fps</div>
          </footer>
        </div>
      </div>
    </div>
  );
}
